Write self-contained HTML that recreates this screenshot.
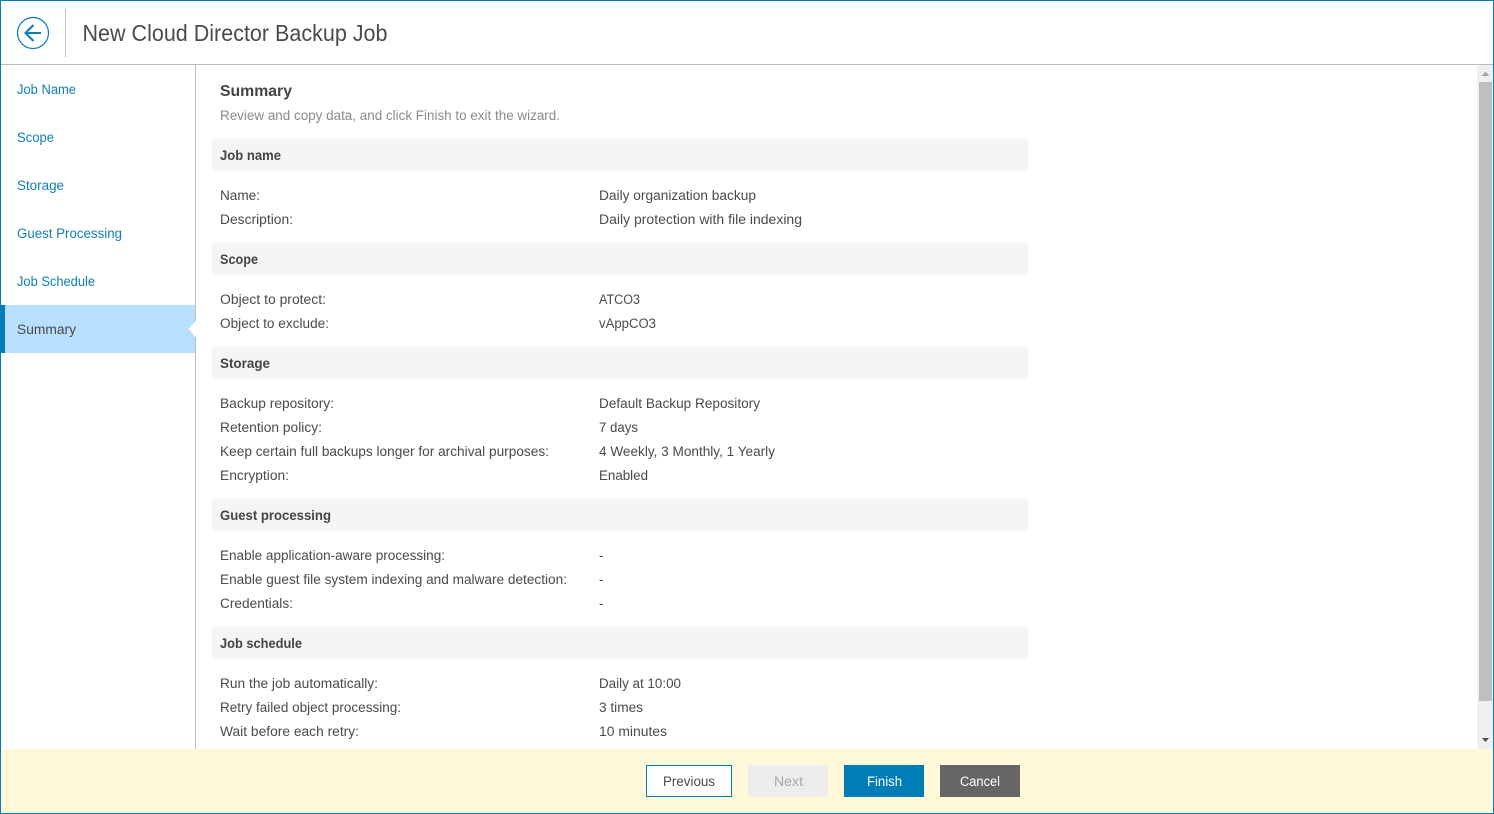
<!DOCTYPE html>
<html lang="en">
<head>
<meta charset="utf-8">
<title>New Cloud Director Backup Job</title>
<style>
html,body{margin:0;padding:0;background:#fff;width:1494px;height:814px;overflow:hidden}
svg{display:block;position:absolute;left:0;top:0}
text{font-family:"Liberation Sans",Arial,sans-serif;font-size:13.5px;fill:#4a4a4a}
.t{font-size:23px;fill:#4a4a4a}
.h{font-weight:bold;font-size:13.5px;fill:#444}
.hh{font-weight:bold;font-size:15.5px;fill:#444}
.s{fill:#8a8a8a}
.n{fill:#0f7fb5}
</style>
</head>
<body>
<svg width="1494" height="814" viewBox="0 0 1494 814" xmlns="http://www.w3.org/2000/svg">
<rect x="0" y="0" width="1494" height="814" fill="#fff"/>

<!-- header -->
<circle cx="33" cy="33" r="15.5" fill="none" stroke="#0a7fb8" stroke-width="1.2"/>
<path d="M41 33H25.5M33.5 25L25.5 33L33.5 41" fill="none" stroke="#0a7fb8" stroke-width="2.1"/>
<rect x="65" y="9" width="1" height="48" fill="#c4c4c4"/>
<text class="t" x="82.5" y="41" textLength="305" lengthAdjust="spacingAndGlyphs">New Cloud Director Backup Job</text>
<rect x="1" y="64" width="1492" height="1" fill="#bdbdbd"/>

<!-- sidebar -->
<rect x="195" y="65" width="1" height="684" fill="#bdbdbd"/>
<rect x="1" y="305" width="194" height="48" fill="#b8e0fe"/>
<rect x="1" y="305" width="4" height="48" fill="#007cb7"/>
<path d="M196 320.5L188.5 329L196 337.5Z" fill="#fff"/>
<text class="n" x="17" y="94" textLength="59" lengthAdjust="spacingAndGlyphs">Job Name</text>
<text class="n" x="17" y="142" textLength="37" lengthAdjust="spacingAndGlyphs">Scope</text>
<text class="n" x="17" y="190" textLength="47" lengthAdjust="spacingAndGlyphs">Storage</text>
<text class="n" x="17" y="238" textLength="105" lengthAdjust="spacingAndGlyphs">Guest Processing</text>
<text class="n" x="17" y="286" textLength="78" lengthAdjust="spacingAndGlyphs">Job Schedule</text>
<text x="17" y="334" textLength="59" lengthAdjust="spacingAndGlyphs">Summary</text>

<!-- content heading -->
<text class="hh" x="220" y="96" textLength="72" lengthAdjust="spacingAndGlyphs">Summary</text>
<text class="s" x="220" y="120" textLength="340" lengthAdjust="spacingAndGlyphs">Review and copy data, and click Finish to exit the wizard.</text>

<!-- section bars -->
<rect x="212" y="139" width="816" height="32" fill="#f5f5f5"/>
<rect x="212" y="243" width="816" height="32" fill="#f5f5f5"/>
<rect x="212" y="347" width="816" height="32" fill="#f5f5f5"/>
<rect x="212" y="499" width="816" height="32" fill="#f5f5f5"/>
<rect x="212" y="627" width="816" height="32" fill="#f5f5f5"/>

<text class="h" x="220" y="160" textLength="61" lengthAdjust="spacingAndGlyphs">Job name</text>
<text x="220" y="200" textLength="40" lengthAdjust="spacingAndGlyphs">Name:</text>
<text x="599" y="200" textLength="157" lengthAdjust="spacingAndGlyphs">Daily organization backup</text>
<text x="220" y="224" textLength="73" lengthAdjust="spacingAndGlyphs">Description:</text>
<text x="599" y="224" textLength="203" lengthAdjust="spacingAndGlyphs">Daily protection with file indexing</text>

<text class="h" x="220" y="264" textLength="38" lengthAdjust="spacingAndGlyphs">Scope</text>
<text x="220" y="304" textLength="106" lengthAdjust="spacingAndGlyphs">Object to protect:</text>
<text x="599" y="304" textLength="41" lengthAdjust="spacingAndGlyphs">ATCO3</text>
<text x="220" y="328" textLength="109" lengthAdjust="spacingAndGlyphs">Object to exclude:</text>
<text x="599" y="328" textLength="57" lengthAdjust="spacingAndGlyphs">vAppCO3</text>

<text class="h" x="220" y="368" textLength="50" lengthAdjust="spacingAndGlyphs">Storage</text>
<text x="220" y="408" textLength="114" lengthAdjust="spacingAndGlyphs">Backup repository:</text>
<text x="599" y="408" textLength="161" lengthAdjust="spacingAndGlyphs">Default Backup Repository</text>
<text x="220" y="432" textLength="102" lengthAdjust="spacingAndGlyphs">Retention policy:</text>
<text x="599" y="432" textLength="39" lengthAdjust="spacingAndGlyphs">7 days</text>
<text x="220" y="456" textLength="329" lengthAdjust="spacingAndGlyphs">Keep certain full backups longer for archival purposes:</text>
<text x="599" y="456" textLength="176" lengthAdjust="spacingAndGlyphs">4 Weekly, 3 Monthly, 1 Yearly</text>
<text x="220" y="480" textLength="69" lengthAdjust="spacingAndGlyphs">Encryption:</text>
<text x="599" y="480" textLength="49" lengthAdjust="spacingAndGlyphs">Enabled</text>

<text class="h" x="220" y="520" textLength="111" lengthAdjust="spacingAndGlyphs">Guest processing</text>
<text x="220" y="560" textLength="225" lengthAdjust="spacingAndGlyphs">Enable application-aware processing:</text>
<text x="599" y="560">-</text>
<text x="220" y="584" textLength="347" lengthAdjust="spacingAndGlyphs">Enable guest file system indexing and malware detection:</text>
<text x="599" y="584">-</text>
<text x="220" y="608" textLength="73" lengthAdjust="spacingAndGlyphs">Credentials:</text>
<text x="599" y="608">-</text>

<text class="h" x="220" y="648" textLength="82" lengthAdjust="spacingAndGlyphs">Job schedule</text>
<text x="220" y="688" textLength="158" lengthAdjust="spacingAndGlyphs">Run the job automatically:</text>
<text x="599" y="688" textLength="82" lengthAdjust="spacingAndGlyphs">Daily at 10:00</text>
<text x="220" y="712" textLength="181" lengthAdjust="spacingAndGlyphs">Retry failed object processing:</text>
<text x="599" y="712" textLength="44" lengthAdjust="spacingAndGlyphs">3 times</text>
<text x="220" y="736" textLength="139" lengthAdjust="spacingAndGlyphs">Wait before each retry:</text>
<text x="599" y="736" textLength="68" lengthAdjust="spacingAndGlyphs">10 minutes</text>

<!-- scrollbar -->
<rect x="1477" y="65" width="16" height="684" fill="#f0f0f0"/>
<rect x="1479" y="82" width="13" height="619" fill="#bfbfbf"/>
<path d="M1485.5 71.5L1489.5 76H1481.5Z" fill="#a6a6a6"/>
<path d="M1482 738H1489L1485.5 742Z" fill="#505050"/>

<!-- footer -->
<rect x="1" y="749" width="1492" height="64" fill="#fff9da"/>
<rect x="646.5" y="765.5" width="85" height="31" fill="#fff" stroke="#007cb7"/>
<text x="663" y="786" textLength="52" lengthAdjust="spacingAndGlyphs">Previous</text>
<rect x="748" y="765" width="80" height="32" fill="#ededed"/>
<text x="774" y="786" textLength="29" lengthAdjust="spacingAndGlyphs" style="fill:#a8a8a8">Next</text>
<rect x="844" y="765" width="80" height="32" fill="#007cb7"/>
<text x="867" y="786" textLength="35" lengthAdjust="spacingAndGlyphs" style="fill:#fff">Finish</text>
<rect x="940" y="765" width="80" height="32" fill="#666"/>
<text x="960" y="786" textLength="40" lengthAdjust="spacingAndGlyphs" style="fill:#fff">Cancel</text>

<!-- outer border -->
<rect x="0.5" y="0.5" width="1493" height="813" fill="none" stroke="#007cb7"/>
</svg>
</body>
</html>
